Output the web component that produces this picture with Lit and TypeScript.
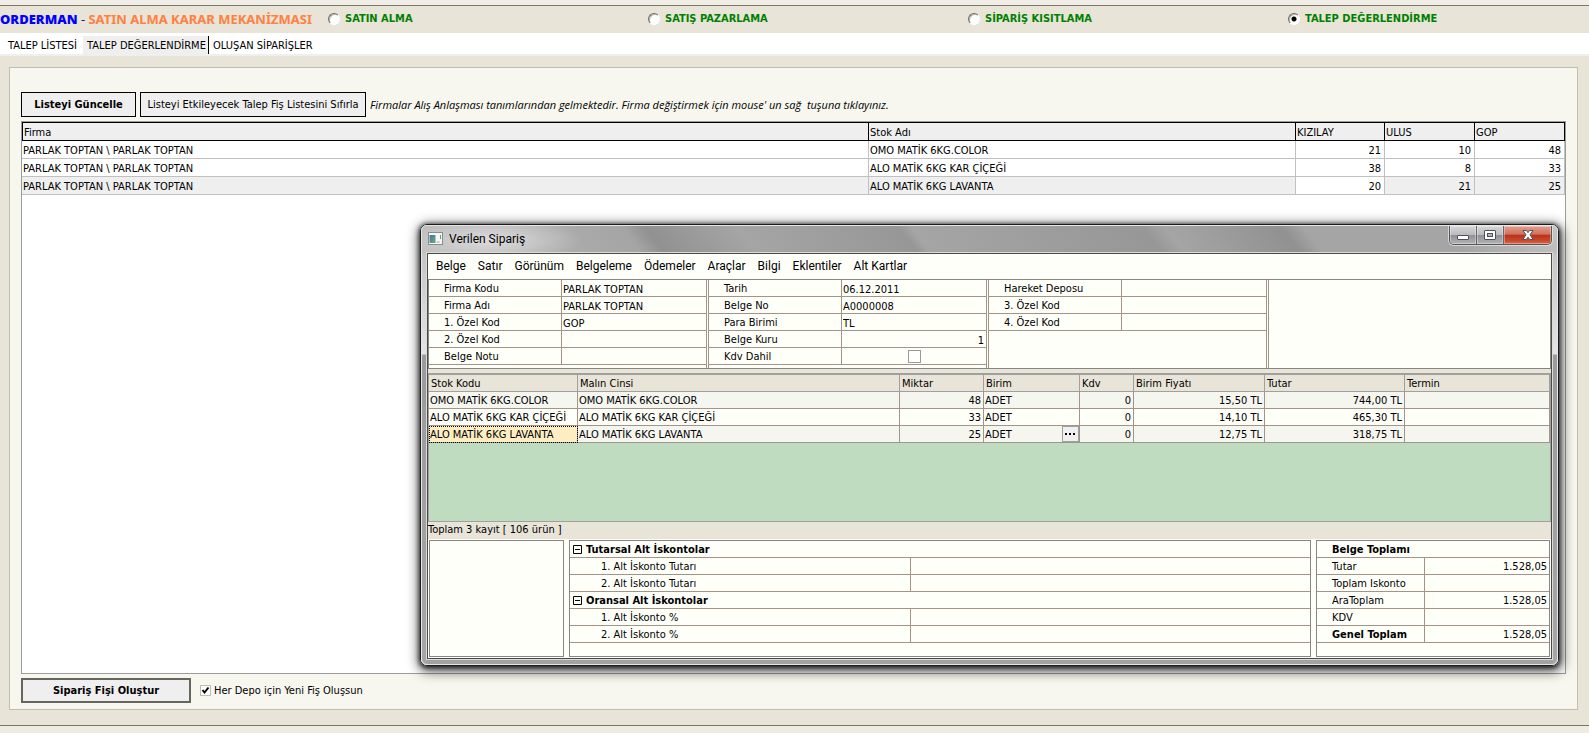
import { LitElement, html, css, nothing } from "lit";
import { customElement, state } from "lit/decorators.js";
import { classMap } from "lit/directives/class-map.js";

interface Field {
  label: string;
  value?: string;
  kind?: "number" | "check";
}

const MODES = ["SATIN ALMA", "SATIŞ PAZARLAMA", "SİPARİŞ KISITLAMA", "TALEP DEĞERLENDİRME"];
const TABS = ["TALEP LİSTESİ", "TALEP DEĞERLENDİRME", "OLUŞAN SİPARİŞLER"];

const REQUESTS = [
  { firm: "PARLAK TOPTAN \\ PARLAK TOPTAN", stock: "OMO MATİK 6KG.COLOR", qty: [21, 10, 48] },
  { firm: "PARLAK TOPTAN \\ PARLAK TOPTAN", stock: "ALO MATİK 6KG KAR ÇİÇEĞİ", qty: [38, 8, 33] },
  { firm: "PARLAK TOPTAN \\ PARLAK TOPTAN", stock: "ALO MATİK 6KG LAVANTA", qty: [20, 21, 25] },
];

const MENU = ["Belge", "Satır", "Görünüm", "Belgeleme", "Ödemeler", "Araçlar", "Bilgi", "Eklentiler", "Alt Kartlar"];

const FIELD_GROUPS: Field[][] = [
  [
    { label: "Firma Kodu", value: "PARLAK TOPTAN" },
    { label: "Firma Adı", value: "PARLAK TOPTAN" },
    { label: "1. Özel Kod", value: "GOP" },
    { label: "2. Özel Kod" },
    { label: "Belge Notu" },
  ],
  [
    { label: "Tarih", value: "06.12.2011" },
    { label: "Belge No", value: "A0000008" },
    { label: "Para Birimi", value: "TL" },
    { label: "Belge Kuru", value: "1", kind: "number" },
    { label: "Kdv Dahil", kind: "check" },
  ],
  [{ label: "Hareket Deposu" }, { label: "3. Özel Kod" }, { label: "4. Özel Kod" }],
];

const ORDER_LINES = [
  { stock: "OMO MATİK 6KG.COLOR", qty: 48, price: "15,50 TL", total: "744,00 TL" },
  { stock: "ALO MATİK 6KG KAR ÇİÇEĞİ", qty: 33, price: "14,10 TL", total: "465,30 TL" },
  { stock: "ALO MATİK 6KG LAVANTA", qty: 25, price: "12,75 TL", total: "318,75 TL" },
];

const DISCOUNTS = [
  { title: "Tutarsal Alt İskontolar", items: ["1. Alt İskonto Tutarı", "2. Alt İskonto Tutarı"] },
  { title: "Oransal Alt İskontolar", items: ["1. Alt İskonto %", "2. Alt İskonto %"] },
];

const TOTALS = [
  { label: "Tutar", value: "1.528,05" },
  { label: "Toplam Iskonto", value: "" },
  { label: "AraToplam", value: "1.528,05" },
  { label: "KDV", value: "" },
  { label: "Genel Toplam", value: "1.528,05", strong: true },
];

@customElement("order-window")
export class OrderWindow extends LitElement {
  static styles = css`
    :host {
      display: block;
      box-sizing: border-box;
      border: 1px solid #1c1c1c;
      border-radius: 7px;
      box-shadow: 0 1px 4px 1px rgba(0, 0, 0, 0.7), 1px 3px 12px 3px rgba(0, 0, 0, 0.6);
      font: 11px "DejaVu Sans Condensed", Tahoma, sans-serif;
      color: #000;
      cursor: default;
    }
    * { box-sizing: border-box; }
    button, input { font: inherit; color: inherit; margin: 0; }
    .frame {
      border: 1px solid #e6e6e6;
      border-radius: 6px;
      padding: 0 5px 5px;
      background:
        linear-gradient(#bdbdbd, #e4e4e4 128px, #9b9b9b 129px, #a6a6a6) left / 5px 100% no-repeat,
        linear-gradient(#bdbdbd, #e4e4e4 128px, #9b9b9b 129px, #a6a6a6) right / 5px 100% no-repeat,
        #a2a2a2;
    }
    .titlebar {
      display: flex;
      align-items: flex-start;
      height: 27px;
      margin: 0 -5px;
      padding-left: 6px;
      border-radius: 5px 5px 0 0;
      background:
        radial-gradient(ellipse 90px 24px at 70px 14px, rgba(225, 225, 225, 0.9), rgba(225, 225, 225, 0)),
        linear-gradient(52deg, rgba(190, 190, 190, 1) 0, rgba(175, 175, 175, 1) 10%, rgba(160, 160, 160, 0) 19%,
          rgba(140, 140, 140, 0.8) 21%, rgba(160, 160, 160, 0) 29%, rgba(145, 145, 145, 0.7) 43%,
          rgba(170, 170, 170, 0) 44%, rgba(145, 145, 145, 0.7) 64%, rgba(170, 170, 170, 0) 66%,
          rgba(140, 140, 140, 0.8) 76%, rgba(170, 170, 170, 0) 78%, rgba(160, 160, 160, 0) 90%, #c4c4c4 100%),
        #a5a5a5;
    }
    .app-icon { display: block; margin: 6px 6px 0 0; }
    .title { flex: 1; font: 12px/27px Roboto, "Segoe UI", sans-serif; }
    .controls {
      display: flex;
      height: 19px;
      margin-right: 5px;
      border: 1px solid #55555c;
      border-top: 0;
      border-radius: 0 0 5px 5px;
      overflow: hidden;
      box-shadow: 0 0 0 1px rgba(235, 235, 235, 0.7);
    }
    .controls button {
      display: grid;
      place-items: center;
      width: 27px;
      padding: 0;
      border: 0;
      border-right: 1px solid #66666c;
      background: linear-gradient(#d6d6d8, #bcbcbf 48%, #8f8f95 50%, #b2b2b6);
      box-shadow: inset 0 0 0 1px rgba(255, 255, 255, 0.35);
    }
    .controls .close {
      width: 47px;
      border-right: 0;
      background: linear-gradient(#e0a091, #d2705c 46%, #b8321a 50%, #c9482b 80%, #d56a50);
    }
    .body { border: 1px solid #4a4a4a; background: #fffffa; box-shadow: 0 0 0 1px #dcdcdc; }
    .menu { display: flex; height: 25px; padding-left: 2px; }
    .menu button {
      padding: 0 6px;
      border: 0;
      background: none;
      font: 12px/25px Roboto, "Segoe UI", sans-serif;
    }
    .sheet { background: #e8e4d8; }
    .form {
      display: grid;
      grid-template-columns: 279px 280px 280px 1fr;
      border: 1px solid #868682;
      height: 90px;
      background: #fffffa;
    }
    .group { border-right: 1px solid #a29587; border-left: 1px solid #a29587; margin-right: 1px; }
    .group:first-child { border-left: 0; }
    .group.blank { border-right: 0; margin: 0; }
    .field {
      display: grid;
      grid-template-columns: 132px 1fr;
      height: 17px;
      border-bottom: 1px solid #a29587;
      line-height: 14px;
    }
    .field label { padding: 2px 0 0 15px; white-space: nowrap; }
    .field .slot { display: flex; justify-content: center; align-items: center; border-left: 1px solid #a29587; }
    .field input[type="text"] {
      width: 100%;
      height: 16px;
      padding: 2px 2px 0 1px;
      border: 0;
      background: none;
      outline: 0;
    }
    .field input.number { text-align: right; }
    .field input[type="checkbox"] {
      appearance: none;
      width: 13px;
      height: 13px;
      border: 1px solid #9a9a9a;
      background: #fff;
    }
    .lines {
      margin-top: 4px;
      border: 1px solid #a0a0a0;
      border-top-width: 2px;
      background: #bfdcc0;
      min-height: 149px;
    }
    table { width: 100%; border-collapse: separate; border-spacing: 0; table-layout: fixed; }
    th, td { height: 17px; padding: 2px 2px 0 1px; line-height: 14px; white-space: nowrap; text-align: left; font-weight: 400; overflow: hidden; }
    .lines th { padding-left: 2px; background: #e8e4d8; border-right: 1px solid #a0a0a0; border-bottom: 1px solid #a0a0a0; }
    .lines td { background: #f6f6f0; border-right: 1px solid #a29587; border-bottom: 1px solid #a29587; }
    .lines tr:nth-child(2) td { background: #fffffa; }
    .lines td.active { background: #ffeec2; outline: 1px dotted #000; outline-offset: -1px; }
    td.num { text-align: right; }
    .with-picker { display: flex; justify-content: space-between; height: 14px; margin-right: -2px; }
    .picker {
      display: grid;
      place-items: center;
      width: 17px;
      height: 16px;
      margin-top: -2px;
      padding: 0;
      border: 1px solid #a0a0a0;
      background: #f0f0f0;
    }
    .status { height: 17px; background: #e8e4d8; line-height: 16px; }
    .footer {
      display: grid;
      grid-template-columns: 135px 1fr 234px;
      gap: 5px;
      padding: 1px;
      height: 119px;
    }
    .box { border: 1px solid #868682; }
    .box th, .box td { border-bottom: 1px solid #a29587; }
    .box .val { border-left: 1px solid #a29587; text-align: right; }
    .box th.head, .box th.strong { font-weight: 700; }
    .discounts .head { padding-left: 3px; }
    .discounts .item { padding-left: 31px; }
    .totals .head, .totals .item { padding-left: 15px; }
    .fold { display: inline-flex; width: 9px; height: 9px; margin-right: 4px; padding: 0; border: 0; background: none; vertical-align: -1px; }
  `;

  private renderField(f: Field, id: string) {
    return html`
      <div class="field">
        <label for=${id}>${f.label}</label>
        <span class="slot">
          ${f.kind === "check"
            ? html`<input id=${id} type="checkbox" />`
            : html`<input id=${id} type="text" class=${classMap({ number: f.kind === "number" })} .value=${f.value ?? ""} />`}
        </span>
      </div>
    `;
  }

  render() {
    return html`
      <div class="frame">
        <header class="titlebar">
          <svg class="app-icon" width="15" height="13" viewBox="0 0 15 13" aria-hidden="true">
            <defs>
              <linearGradient id="pane" x1="0" y1="0" x2="1" y2="1">
                <stop offset="0" stop-color="#4b74a0" />
                <stop offset="1" stop-color="#5db089" />
              </linearGradient>
            </defs>
            <rect x="0.5" y="0.5" width="14" height="12" fill="#f6f6f4" stroke="#8c8c8c" />
            <rect x="1.5" y="3" width="6" height="8" fill="url(#pane)" />
            <rect x="8.5" y="9" width="3" height="2" fill="#c9c9c9" />
            <rect x="12" y="3" width="1" height="4" fill="#5aa08c" />
          </svg>
          <span class="title">Verilen Sipariş</span>
          <div class="controls">
            <button aria-label="Simge durumuna küçült">
              <svg width="14" height="12" viewBox="0 0 14 12">
                <rect x="1.5" y="6.5" width="11" height="4" rx="0.5" fill="#fff" stroke="#50505c" />
              </svg>
            </button>
            <button aria-label="Ekranı kapla">
              <svg width="14" height="12" viewBox="0 0 14 12">
                <rect x="1.5" y="1.5" width="11" height="9" rx="0.5" fill="#fff" stroke="#50505c" />
                <rect x="4.5" y="4.5" width="5" height="3" fill="#b4b4ba" stroke="#50505c" />
              </svg>
            </button>
            <button class="close" aria-label="Kapat">
              <svg width="14" height="12" viewBox="0 0 14 12">
                <path
                  d="M2 1.5h3.4L7 3.6l1.6-2.1H12L9 5.8l3.2 4.7H8.700L7 8.200 5.300 10.500H1.800L5 5.800z"
                  fill="#fff" stroke="#50505c"
                />
              </svg>
            </button>
          </div>
        </header>

        <div class="body">
          <nav class="menu">${MENU.map((m) => html`<button>${m}</button>`)}</nav>

          <div class="sheet">
            <div class="form">
              ${FIELD_GROUPS.map(
                (group, g) => html`<div class="group">${group.map((f, i) => this.renderField(f, `field-${g}-${i}`))}</div>`
              )}
              <div class="group blank"></div>
            </div>

            <div class="lines">
              <table>
                <colgroup>
                  <col style="width:149px" /><col /><col style="width:84px" /><col style="width:96px" />
                  <col style="width:54px" /><col style="width:131px" /><col style="width:140px" /><col style="width:145px" />
                </colgroup>
                <thead>
                  <tr>
                    ${["Stok Kodu", "Malın Cinsi", "Miktar", "Birim", "Kdv", "Birim Fiyatı", "Tutar", "Termin"].map(
                      (h) => html`<th scope="col">${h}</th>`
                    )}
                  </tr>
                </thead>
                <tbody>
                  ${ORDER_LINES.map((l, i) => {
                    const active = i === ORDER_LINES.length - 1;
                    return html`
                      <tr>
                        <td class=${classMap({ active })}>${l.stock}</td>
                        <td>${l.stock}</td>
                        <td class="num">${l.qty}</td>
                        <td>
                          <div class="with-picker">
                            ADET
                            ${active
                              ? html`<button class="picker" aria-label="Birim seç">
                                  <svg width="11" height="2" viewBox="0 0 11 2">
                                    <path d="M0 0h2v2H0zM4 0h2v2H4zM8 0h2v2H8z" />
                                  </svg>
                                </button>`
                              : nothing}
                          </div>
                        </td>
                        <td class="num">0</td>
                        <td class="num">${l.price}</td>
                        <td class="num">${l.total}</td>
                        <td></td>
                      </tr>
                    `;
                  })}
                </tbody>
              </table>
            </div>
          </div>
          <div class="status">Toplam 3 kayıt [ 106 ürün ]</div>

          <div class="footer">
            <div class="box"></div>
            <div class="box discounts">
              <table>
                <colgroup><col style="width:46%" /><col /></colgroup>
                ${DISCOUNTS.map(
                  (d) => html`
                    <tbody>
                      <tr>
                        <th class="head" colspan="2" scope="rowgroup">
                          <button class="fold" aria-label="Daralt">
                            <svg width="9" height="9" viewBox="0 0 9 9">
                              <path d="M0.500 0.500h8v8h-8zM2 4.500h5" fill="none" stroke="#000" />
                            </svg></button>${d.title}
                        </th>
                      </tr>
                      ${d.items.map((t) => html`<tr><th class="item" scope="row">${t}</th><td class="val"></td></tr>`)}
                    </tbody>
                  `
                )}
              </table>
            </div>
            <div class="box totals">
              <table>
                <colgroup><col style="width:107px" /><col /></colgroup>
                <tbody>
                  <tr><th class="head" colspan="2" scope="col">Belge Toplamı</th></tr>
                  ${TOTALS.map(
                    (t) => html`
                      <tr>
                        <th class=${classMap({ item: true, strong: !!t.strong })} scope="row">${t.label}</th>
                        <td class="val">${t.value}</td>
                      </tr>
                    `
                  )}
                </tbody>
              </table>
            </div>
          </div>
        </div>
      </div>
    `;
  }
}

@customElement("app-root")
export class AppRoot extends LitElement {
  static styles = css`
    :host {
      display: flex;
      flex-direction: column;
      position: relative;
      min-height: 100vh;
      box-sizing: border-box;
      overflow: hidden;
      background: #e8e4d8;
      color: #000;
      font: 11px "DejaVu Sans Condensed", Tahoma, sans-serif;
    }
    * { box-sizing: border-box; }
    button, input { font: inherit; color: inherit; margin: 0; }
    .edge-top { height: 6px; background: #f0ede6; border-bottom: 1px solid #7d7768; }
    .header { display: flex; align-items: center; height: 27px; padding-bottom: 2px; font-weight: 700; }
    .brand { flex: 0 0 328px; white-space: nowrap; color: #ff8040; font: 700 13px "Noto Sans", sans-serif; }
    .brand b { color: #00f; }
    .brand i { color: #1a1a8c; font-style: normal; font-weight: 400; }
    .modes { flex: 1; display: grid; grid-template-columns: 320fr 320fr 320fr 301fr; color: #008000; }
    .mode { display: flex; align-items: center; gap: 5px; white-space: nowrap; }
    .mode input {
      appearance: none;
      width: 12px;
      height: 12px;
      border: 1px solid;
      border-color: #6e6e6e #fff #fff #6e6e6e;
      border-radius: 50%;
      background: #fff;
      box-shadow: inset 1px 1px 0 #b8b4a8;
    }
    .mode input:checked { background: radial-gradient(circle, #000 2px, #fff 3px); }
    .tabs { display: flex; height: 23px; padding-top: 3px; background: #fff; border-bottom: 2px solid #efefef; }
    .tabs button {
      height: 18px;
      padding: 2px 4px 0;
      border: 0;
      background: none;
      line-height: 16px;
      white-space: nowrap;
    }
    .tabs button:first-child { padding-left: 8px; padding-right: 6px; }
    .tabs .current { padding-right: 2px; background: #efefef; border-right: 1px solid #000; }
    .panel {
      flex: 1;
      display: flex;
      flex-direction: column;
      margin: 11px 11px 15px 9px;
      padding: 24px 11px 6px 11px;
      border: 1px solid #c1beb1;
      background: #f7f7ef;
    }
    .toolbar { display: flex; align-items: center; gap: 4px; height: 25px; margin-bottom: 4px; }
    .toolbar button { height: 25px; padding: 0; border: 1px solid #000; background: #efefef; white-space: nowrap; }
    .toolbar .refresh { width: 115px; font-weight: 700; }
    .toolbar .reset { width: 226px; }
    .hint { font: italic 11px "Open Sans", sans-serif; white-space: pre; }
    .grid { flex: 1; border: 1px solid #9c9c9c; background: #fff; }
    table { width: 100%; border-collapse: separate; border-spacing: 0; table-layout: fixed; }
    th, td { height: 18px; padding: 2px 3px 0 1px; text-align: left; white-space: nowrap; font-weight: 400; line-height: 15px; }
    td { border-right: 1px solid #c0c0c0; border-bottom: 1px solid #c0c0c0; }
    th { height: 19px; background: #efefef; border: 1px solid #000; border-left: 0; }
    th:first-child { border-left: 1px solid #000; }
    td.num { text-align: right; }
    .selected td { background: #efefef; }
    .selected td.focus { background: #fff; }
    .actions { display: flex; align-items: center; gap: 9px; margin-top: 4px; }
    .create { width: 170px; height: 25px; padding: 0; border: 2px solid #66665f; background: #efefef; font-weight: 700; }
    .per-depot { display: flex; align-items: center; gap: 3px; }
    .per-depot input {
      appearance: none;
      display: grid;
      place-items: center;
      width: 11px;
      height: 11px;
      border: 1px solid #c1beb1;
      background: #fff;
    }
    .check { position: relative; display: flex; }
    .check svg { position: absolute; inset: 0; pointer-events: none; }
    .edge-bottom { height: 8px; background: #eeece2; border-top: 1px solid #7d7768; }
    .order { position: absolute; left: 420px; right: 30px; top: 224px; }
  `;

  @state() private mode = 3;
  @state() private tab = 1;
  @state() private perDepot = true;

  render() {
    return html`
      <div class="edge-top"></div>
      <header class="header">
        <div class="brand"><b>ORDERMAN</b> <i>-</i> SATIN ALMA KARAR MEKANİZMASI</div>
        <div class="modes">
          ${MODES.map(
            (m, i) => html`
              <label class="mode">
                <input type="radio" name="mode" .checked=${this.mode === i} @change=${() => (this.mode = i)} />
                ${m}
              </label>
            `
          )}
        </div>
      </header>
      <nav class="tabs">
        ${TABS.map(
          (t, i) => html`<button class=${classMap({ current: this.tab === i })} @click=${() => (this.tab = i)}>${t}</button>`
        )}
      </nav>

      <main class="panel">
        <div class="toolbar">
          <button class="refresh">Listeyi Güncelle</button>
          <button class="reset">Listeyi Etkileyecek Talep Fiş Listesini Sıfırla</button>
          <span class="hint">Firmalar Alış Anlaşması tanımlarından gelmektedir. Firma değiştirmek için mouse' un sağ  tuşuna tıklayınız.</span>
        </div>
        <div class="grid">
          <table>
            <colgroup>
              <col /><col style="width:427px" /><col style="width:89px" /><col style="width:90px" /><col style="width:90px" />
            </colgroup>
            <thead>
              <tr>${["Firma", "Stok Adı", "KIZILAY", "ULUS", "GOP"].map((h) => html`<th scope="col">${h}</th>`)}</tr>
            </thead>
            <tbody>
              ${REQUESTS.map(
                (r, i) => html`
                  <tr class=${classMap({ selected: i === 2 })}>
                    <td>${r.firm}</td>
                    <td>${r.stock}</td>
                    ${r.qty.map((q, c) => html`<td class=${classMap({ num: true, focus: c === 0 })}>${q}</td>`)}
                  </tr>
                `
              )}
            </tbody>
          </table>
        </div>
        <div class="actions">
          <button class="create">Sipariş Fişi Oluştur</button>
          <label class="per-depot">
            <span class="check">
              <input
                type="checkbox"
                .checked=${this.perDepot}
                @change=${(e: Event) => (this.perDepot = (e.target as HTMLInputElement).checked)}
              />
              ${this.perDepot
                ? html`<svg width="11" height="11" viewBox="0 0 11 11" aria-hidden="true">
                    <path d="M2.500 5l2 2.500 4-5" fill="none" stroke="#000" stroke-width="2" />
                  </svg>`
                : nothing}
            </span>
            Her Depo için Yeni Fiş Oluşsun
          </label>
        </div>
      </main>
      <div class="edge-bottom"></div>

      <order-window class="order"></order-window>
    `;
  }
}
